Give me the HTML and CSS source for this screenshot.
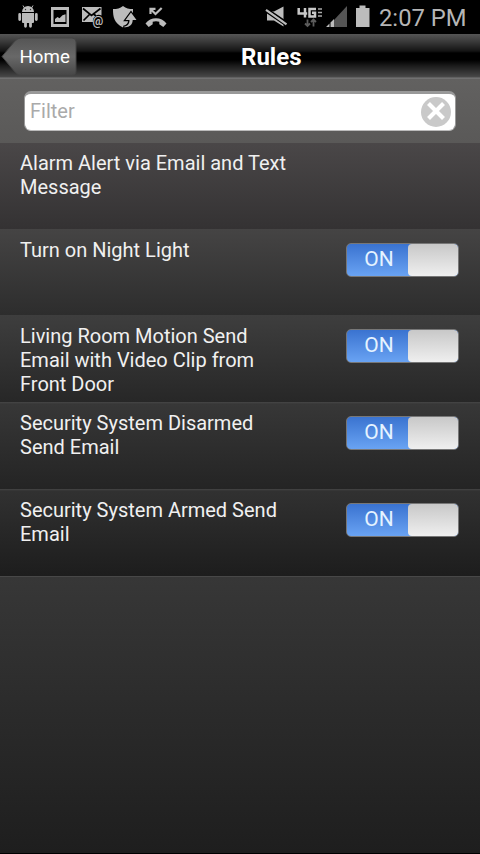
FILE: index.html
```html
<!DOCTYPE html>
<html lang="en">
<head>
<meta charset="utf-8">
<title>Rules</title>
<link rel="stylesheet" href="styles.css">
</head>
<body>
<div class="status">
  <svg class="icons" width="180" height="34" viewBox="0 0 180 34" fill="#bcbcbc">
    <path d="M22 12a6 6 0 0 1 12 0zM22 13h12v9a1 1 0 0 1-1 1H23a1 1 0 0 1-1-1z"/>
    <path d="M24.500 8L23 5.500M31.500 8L33 5.500" stroke="#bcbcbc" stroke-width="1"/>
    <path d="M19.700 14.500v5M36.300 14.500v5M25.500 22v4.300M30.500 22v4.300" stroke="#bcbcbc" stroke-width="2.800" stroke-linecap="round"/>
    <circle cx="25.500" cy="9.500" r=".7" fill="#333"/><circle cx="30.500" cy="9.500" r=".7" fill="#333"/>
    <path fill-rule="evenodd" d="M51 7h18v20H51zM53.500 10v14h13V10z"/>
    <path d="M55 22v-3l2.500-2 2 1.300 3-3 3-1V22z"/>
    <path d="M82 7h19.500v8.500a6 6 0 0 0-8.500 6.500H82z"/>
    <path d="M83 8.500l8.500 7 9-7M83.500 20.500l6-6M93 13.500l3 2.500" fill="none" stroke="#000" stroke-width="1.700"/>
    <text x="92.500" y="24.500" class="at">@</text>
    <path d="M123 6c3 2.500 6 3 10 3 0 8-1 14-10 18.500C114 23 113 17 113 9c4 0 7-.5 10-3z"/>
    <path d="M123.500 27c4-1 6-3 6-7H125.500l5.500-7.500 5.500 7.500h-3.800c0 5-4.200 8-9.200 7z" stroke="#000" stroke-width="2.400" paint-order="stroke"/>
    <path d="M145.500 23.500c5-7 16-7 21 0l-3.200 3.500-4-2.700v-2.500c-2-.8-4.600-.8-6.600 0v2.500l-4 2.700z"/>
    <path d="M150.500 14V8.900h5M150.500 9l5 5 6.200-6" fill="none" stroke="#bcbcbc" stroke-width="2.200"/>
  </svg>
  <svg class="icons" width="112" height="34" viewBox="262 0 112 34" fill="#bcbcbc">
    <path d="M267 11.500h7l9.500-5v20l-9.500-6h-7z"/>
    <path d="M265 11l22 15M265 7.500l22 15" stroke="#000" stroke-width="2"/>
    <path d="M266 9.800l20.500 14.500" stroke="#bcbcbc" stroke-width="2.200"/>
    <path d="M298.700 8v5.500h8.500M305 8v9.500M316 9h-6.500v7.500h5.500v-3.700h-3" fill="none" stroke="#c8c8c8" stroke-width="2.500"/>
    <path d="M318 9h4M318 12.500h4M318 16h4" stroke="#aaa" stroke-width="1.500"/>
    <path d="M307.500 19.500v6.500M305 23.500l2.500 2.500 2.500-2.500M313.500 26.500v-6.500M311 22l2.500-2.500 2.500 2.500" fill="none" stroke="#5c5c5c" stroke-width="1.800"/>
    <path d="M334 20L347 6v21h-13z" fill="#555"/>
    <path d="M326 27l3.500-3.500V27zM330.500 27v-4.500l3.500-3.500v8z"/>
    <path d="M356 8h3.500V5.500h6V8h4v19H356z"/>
  </svg>
  <span class="clock">2:07 PM</span>
</div>
<header class="bar">
  <a class="back">
    <svg class="back-shape" width="76" height="40" viewBox="0 0 76 40">
      <defs><linearGradient id="g" x1="0" y1="0" x2="0" y2="1"><stop offset="0" stop-color="#555"/><stop offset=".5" stop-color="#686868"/><stop offset="1" stop-color="#464646"/></linearGradient></defs>
      <path d="M1 19.500L14 4Q17 1 20 1H71Q75 1 75 5V34Q75 38.500 71 38.500H20Q17 38.500 14 35Z" fill="url(#g)" stroke="#444"/>
    </svg>
    <span class="back-label">Home</span>
  </a>
  <h1 class="title">Rules</h1>
</header>
<div class="search">
  <div class="field"><span>Filter</span>
    <svg width="30" height="30" viewBox="0 0 30 30"><circle cx="15" cy="15" r="15" fill="#c9c9c9"/><path d="M7.500 6.500l15 15M22.500 6.500l-15 15" stroke="#fff" stroke-width="4.200"/></svg>
  </div>
</div>
<ul class="rules">
  <li class="rule r1"><span class="name">Alarm Alert via Email and Text Message</span></li>
  <li class="rule r2"><span class="name">Turn on Night Light</span><span class="switch"><b>ON</b><i></i></span></li>
  <li class="rule r3"><span class="name">Living Room Motion Send Email with Video Clip from Front Door</span><span class="switch"><b>ON</b><i></i></span></li>
  <li class="rule r4"><span class="name">Security System Disarmed Send Email</span><span class="switch"><b>ON</b><i></i></span></li>
  <li class="rule r5"><span class="name">Security System Armed Send Email</span><span class="switch"><b>ON</b><i></i></span></li>
</ul>
<div class="rest"></div>
</body>
</html>
```
FILE: styles.css
```css
* { box-sizing: border-box; }
body {
  margin: 0;
  height: 854px;
  display: flex;
  flex-direction: column;
  overflow: hidden;
  background: #1e1e1e;
  color: #f0f0f0;
  font-family: Roboto, "Liberation Sans", sans-serif;
}
.status {
  height: 34px;
  flex: none;
  display: flex;
  justify-content: space-between;
  background: #000;
}
.icons { flex: none; }
.icons + .icons { margin-left: 82px; }
.at { font-size: 12px; font-weight: 700; }
.clock {
  width: 106px;
  padding-left: 5px;
  font-size: 23.800px;
  line-height: 37px;
  white-space: nowrap;
  color: #b5b5b5;
}
.bar {
  height: 45px;
  flex: none;
  display: grid;
  grid-template-columns: 77px 1fr 15px;
  padding-top: 3px;
  background: linear-gradient(#555 0, #383838 8px, #141414 17px, #000 19px, #000 26px, #1c1c1c 32px, #444 42px, #4a4a4a 43px, #777 44px, #6b6b6b 45px);
}
.back { display: grid; height: 40px; }
.back-shape, .back-label { grid-area: 1 / 1; }
.back-shape { margin-left: 1px; }
.back-label { padding-left: 19.500px; font-size: 18.700px; line-height: 40px; color: #fff; }
.title {
  margin: 0 0 0 164px;
  font-size: 24px;
  line-height: 41px;
  font-weight: 700;
  color: #fff;
}
.search {
  height: 64px;
  flex: none;
  padding: 12px 24px 0;
  background: linear-gradient(#626160, #5a5958);
}
.field {
  height: 40px;
  display: flex;
  align-items: center;
  justify-content: space-between;
  padding: 0 4px 1px 5px;
  border: 1px solid #999;
  border-top: 3px solid #999;
  border-bottom-color: #bbb;
  border-radius: 7px;
  background: #fff;
  color: #aaa;
  font-size: 20px;
}
.field span { margin-top: -2px; }
.rules { margin: 0; padding: 0; list-style: none; flex: none; }
.rule {
  height: 86.800px;
  display: flex;
  justify-content: space-between;
  align-items: flex-start;
  padding: 9px 21px 0 20px;
}
.r1 { height: 85.500px; padding-top: 8px; background: linear-gradient(#4a4748, #343233); }
.r2 { background: linear-gradient(#454444, #2d2d2d); }
.r3 { background: linear-gradient(#3e3e3e, #272727); }
.r4 { background: linear-gradient(#464646 0, #373737 2px, #242424); }
.r5 { background: linear-gradient(#454545 0, #313131 2px, #1d1d1d); }
.name { width: 280px; font-size: 20px; line-height: 24px; }
.switch {
  width: 113px;
  height: 34px;
  margin-top: 5px;
  display: flex;
  border: 1px solid #777;
  border-radius: 5px;
  overflow: hidden;
  background: linear-gradient(#3a73d0, #69a3f3);
}
.switch b {
  width: 61px;
  padding-left: 3px;
  text-align: center;
  font-weight: 400;
  font-size: 21px;
  line-height: 31px;
  color: #e5f3ff;
}
.switch i {
  flex: 1;
  border-radius: 4px;
  background: linear-gradient(#c8c8c8, #efefef);
}
.rest {
  flex: 1;
  border-top: 1px solid #484848;
  border-bottom: 1px solid #000;
  background: linear-gradient(#373737, #1e1e1e);
}
```
